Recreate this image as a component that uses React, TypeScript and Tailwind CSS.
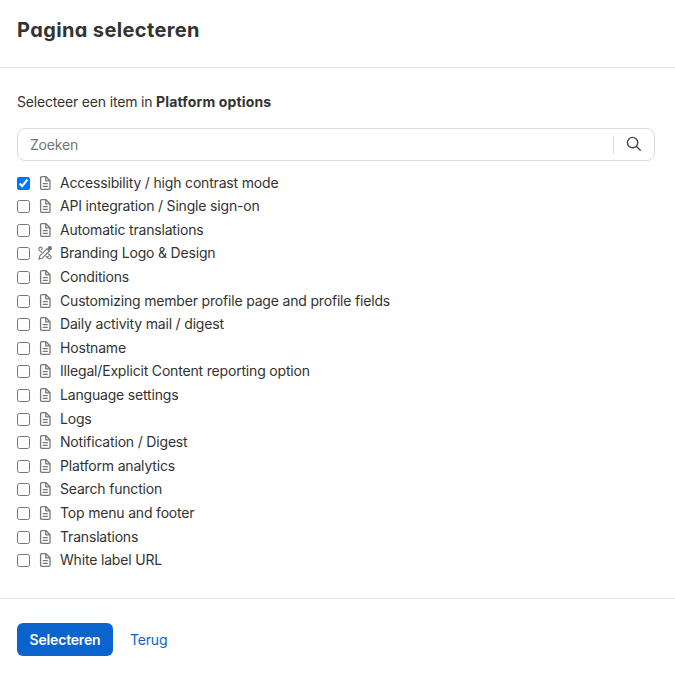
import { useState } from "react";

type Option = {
  label: string;
  icon?: "page" | "design";
};

const options: Option[] = [
  { label: "Accessibility / high contrast mode" },
  { label: "API integration / Single sign-on" },
  { label: "Automatic translations" },
  { label: "Branding Logo & Design", icon: "design" },
  { label: "Conditions" },
  { label: "Customizing member profile page and profile fields" },
  { label: "Daily activity mail / digest" },
  { label: "Hostname" },
  { label: "Illegal/Explicit Content reporting option" },
  { label: "Language settings" },
  { label: "Logs" },
  { label: "Notification / Digest" },
  { label: "Platform analytics" },
  { label: "Search function" },
  { label: "Top menu and footer" },
  { label: "Translations" },
  { label: "White label URL" },
];

function PageIcon() {
  return (
    <svg viewBox="0 0 14 14" className="size-3.5 shrink-0" fill="none" stroke="#777" strokeWidth="1.3" strokeLinejoin="round">
      <path d="M2.6 1.9Q2.6.7 3.8.7H8L12 4.7V12.1Q12 13.3 10.8 13.3H3.8Q2.6 13.3 2.6 12.1Z" />
      <path d="M7.8.9V4.9H11.8" />
      <path d="M4.8 7.6H9.8M4.8 10.4H9.8" />
    </svg>
  );
}

// Pencil with a curl on either side
function DesignIcon() {
  return (
    <svg viewBox="0 0 14 14" className="size-3.5 shrink-0" fill="none" stroke="#777" strokeWidth="1.15" strokeLinecap="round" strokeLinejoin="round">
      <path d="M.8 13.2L1.8 9.8L9 2.6L11.4 5L4.2 12.2Z" />
      <circle cx="11.8" cy="2.2" r="1.6" fill="#777" />
      <path d="M3.5 6.1L1.3 4.1Q.4 2.9 1.3 1.7Q2.5.6 3.8 1.6Q4.8 2.6 3.6 3.5" />
      <path d="M10.5 7.9L12.7 9.9Q13.6 11.1 12.7 12.3Q11.5 13.4 10.2 12.4L8.1 10.3M10.6 10.1L9.7 10.8" />
    </svg>
  );
}

function SearchIcon() {
  return (
    <svg viewBox="0 0 16 16" className="mb-0.5 size-4" fill="none" stroke="#484848" strokeWidth="1.4" strokeLinecap="round">
      <circle cx="6.6" cy="6.6" r="5.2" />
      <path d="M10.5 10.5L14.3 14.2" />
    </svg>
  );
}

export default function App() {
  const [selected, setSelected] = useState<string[]>([options[0].label]);
  const [query, setQuery] = useState("");

  const visible = options.filter((o) => o.label.toLowerCase().includes(query.toLowerCase()));

  const toggle = (label: string) => {
    setSelected((prev) => (prev.includes(label) ? prev.filter((l) => l !== label) : [...prev, label]));
  };

  return (
    <div className="flex h-[677px] flex-col bg-white font-['Inter',sans-serif] text-sm tracking-[-0.18px] text-[#333]">
      <header className="flex h-[68px] items-start border-b border-[#e3e3e3] px-[17px] pt-4">
        <h1 className="text-[20px] leading-7 font-bold tracking-[0.37px] [font-feature-settings:'cv11']">
          Pagina selecteren
        </h1>
      </header>

      <main className="px-[17px] pt-6">
        <p className="leading-5">
          Selecteer een item in <strong className="font-bold tracking-[0.15px]">Platform options</strong>
        </p>

        <div className="mt-4 mr-[3px] flex h-[33px] items-center rounded-lg border border-[#dcdcdc]">
          <input
            type="text"
            value={query}
            onChange={(e) => setQuery(e.target.value)}
            placeholder="Zoeken"
            className="min-w-0 flex-1 px-3 outline-none placeholder:text-[#757575]"
          />
          <button type="button" className="flex h-[18px] w-[41px] items-center justify-center border-l border-[#dcdcdc]">
            <SearchIcon />
          </button>
        </div>

        <ul className="pt-[9.9px]">
          {visible.map((option) => (
            <li key={option.label}>
              <label className="flex h-[23.6px] items-center">
                <input
                  type="checkbox"
                  checked={selected.includes(option.label)}
                  onChange={() => toggle(option.label)}
                  className="mt-px size-[13px] shrink-0"
                />
                <span className="mr-2 ml-2">
                  {option.icon === "design" ? <DesignIcon /> : <PageIcon />}
                </span>
                <span>{option.label}</span>
              </label>
            </li>
          ))}
        </ul>
      </main>

      <footer className="mt-auto flex h-[79px] items-start border-t border-[#e3e3e3] px-[17px] pt-6">
        <button type="button" className="h-[33px] w-24 rounded-md bg-[#0b63ce] font-semibold text-white">
          Selecteren
        </button>
        <button type="button" className="ml-[17px] h-[33px] text-[#0b63ce]">
          Terug
        </button>
      </footer>
    </div>
  );
}
